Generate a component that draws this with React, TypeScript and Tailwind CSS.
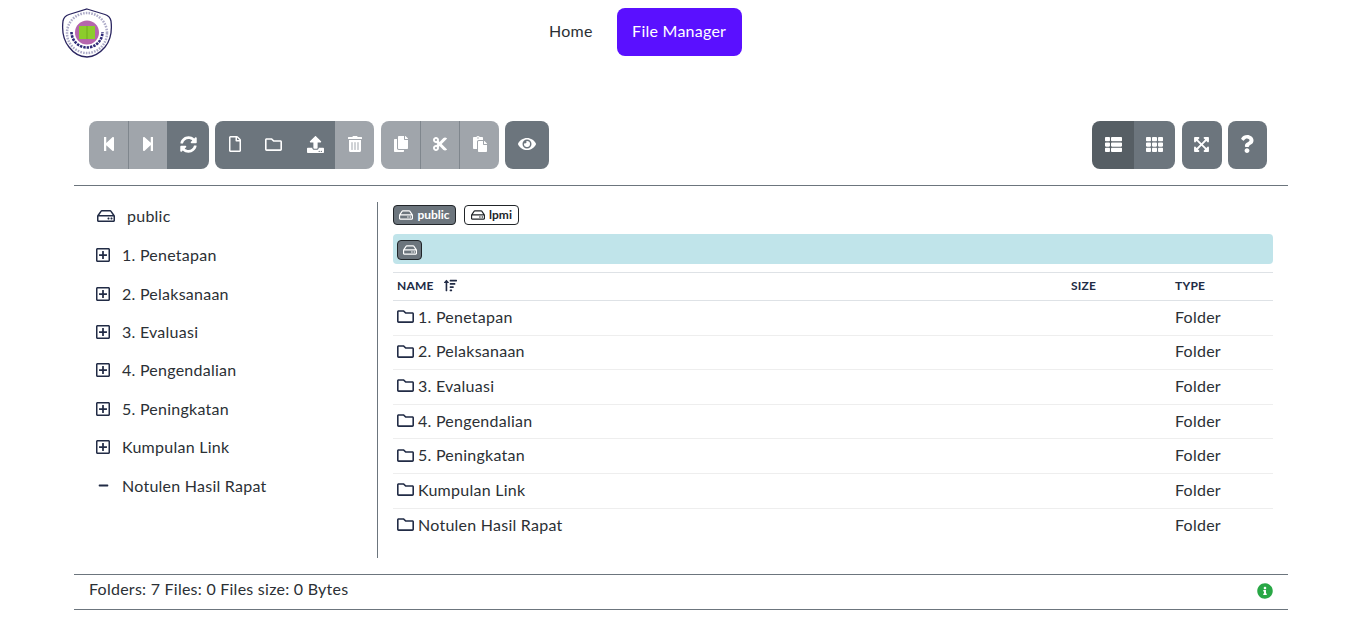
import type { ReactNode } from "react";
import {
  FaStepBackward,
  FaStepForward,
  FaSyncAlt,
  FaRegFile,
  FaRegFolder,
  FaUpload,
  FaTrashAlt,
  FaCopy,
  FaCut,
  FaPaste,
  FaEye,
  FaThList,
  FaTh,
  FaExpandArrowsAlt,
  FaQuestion,
  FaRegHdd,
  FaRegPlusSquare,
  FaMinus,
  FaSortAmountUp,
  FaInfoCircle,
} from "react-icons/fa";

const folders = [
  "1. Penetapan",
  "2. Pelaksanaan",
  "3. Evaluasi",
  "4. Pengendalian",
  "5. Peningkatan",
  "Kumpulan Link",
  "Notulen Hasil Rapat",
];

function Logo() {
  return (
    <svg width="52" height="50" viewBox="0 0 52 50" className="shrink-0">
      <path
        d="M26 1 L44 6.5 Q49 8 50 13 Q52 29 44 39 Q36 48.5 26 49 Q15 48.5 8 39 Q0 29 2 13 Q3 8 8 6.5 Z"
        fill="#ffffff"
        stroke="#2a2560"
        strokeWidth="1.3"
      />
      <circle cx="26" cy="25" r="20" fill="none" stroke="#8a88b0" strokeWidth="2.5" strokeDasharray="1.6 1.2" opacity="0.7" />
      <path d="M10.5 24 A15.5 15.5 0 0 0 41.5 24" fill="none" stroke="#2f2b78" strokeWidth="2.6" strokeDasharray="2.4 1" />
      <circle cx="26" cy="24.5" r="12" fill="#b565ad" />
      <rect x="18" y="18" width="16" height="13" fill="#8ccc2c" />
      <path d="M26 18 V31" stroke="#6aa51c" strokeWidth="0.8" />
    </svg>
  );
}

function ToolButton({
  children,
  tone = "normal",
  className = "",
}: {
  children: ReactNode;
  tone?: "normal" | "muted" | "active";
  className?: string;
}) {
  const bg =
    tone === "muted" ? "bg-[#a0a5ab]" : tone === "active" ? "bg-[#565e64]" : "bg-[#6c757d]";
  return (
    <button className={`flex h-12 items-center justify-center pb-[2px] text-white ${bg} ${className}`}>
      {children}
    </button>
  );
}

export default function App() {
  return (
    <div className="min-h-screen bg-white text-[16px] tracking-[0.25px] text-[#2b3035] [font-family:'Lato','Noto_Sans',sans-serif]">
      <nav className="flex h-16 items-start pl-[61px] pt-2">
        <Logo />
        <div className="ml-[436px] flex items-center gap-6">
          <a className="pb-[2px]">Home</a>
          <a className="flex h-12 w-[125px] items-center justify-center rounded-lg bg-[#5a10ff] pb-[2px] text-white">
            File Manager
          </a>
        </div>
      </nav>

      <div className="ml-[74px] mt-[57px] w-[1214px]">
        <div className="flex h-[65px] justify-between border-b border-[#6c757d] pl-[15px] pr-[21px]">
          <div className="flex gap-[6px]">
            <div className="flex h-12 overflow-hidden rounded-lg">
              <ToolButton tone="muted" className="w-10 border-r border-[#7f868d]"><FaStepBackward size={16} /></ToolButton>
              <ToolButton tone="muted" className="w-[38px]"><FaStepForward size={16} /></ToolButton>
              <ToolButton className="w-[42px]"><FaSyncAlt size={17} /></ToolButton>
            </div>
            <div className="flex h-12 overflow-hidden rounded-lg">
              <ToolButton className="w-10"><FaRegFile size={16} /></ToolButton>
              <ToolButton className="w-10 pr-[3px]"><FaRegFolder size={17} /></ToolButton>
              <ToolButton className="w-10"><FaUpload size={17} /></ToolButton>
              <ToolButton tone="muted" className="w-[39px]"><FaTrashAlt size={16} /></ToolButton>
            </div>
            <div className="ml-[1px] flex h-12 overflow-hidden rounded-lg">
              <ToolButton tone="muted" className="w-10 border-r border-[#7f868d]"><FaCopy size={16} /></ToolButton>
              <ToolButton tone="muted" className="w-[39px] border-r border-[#7f868d]"><FaCut size={16} /></ToolButton>
              <ToolButton tone="muted" className="w-[39px]"><FaPaste size={16} /></ToolButton>
            </div>
            <ToolButton className="w-11 rounded-lg"><FaEye size={18} /></ToolButton>
          </div>
          <div className="flex gap-[6px]">
            <div className="mr-[1px] flex h-12 overflow-hidden rounded-lg">
              <ToolButton tone="active" className="w-[42px]"><FaThList size={17} /></ToolButton>
              <ToolButton className="w-[41px]"><FaTh size={17} /></ToolButton>
            </div>
            <ToolButton className="w-10 rounded-lg pr-[2px]"><FaExpandArrowsAlt size={17} /></ToolButton>
            <ToolButton className="w-[39px] rounded-lg pr-[2px]"><FaQuestion size={18} /></ToolButton>
          </div>
        </div>

        <div className="mt-4 flex h-[356px]">
          <div className="w-[304px] shrink-0 border-r border-[#6c757d] pl-[21px]">
            <div className="flex h-[29px] items-center gap-[12px] pb-[2px] pl-[2px]">
              <FaRegHdd size={18} className="text-[#212b45]" />
              <span>public</span>
            </div>
            <ul>
              {folders.map((name, i) => (
                <li key={name} className={`flex h-[38.4px] items-center gap-[11px] pb-[2px] ${i === 0 ? "mt-[6px]" : ""}`}>
                  {i === folders.length - 1 ? (
                    <span className="flex w-4 justify-center">
                      <FaMinus size={11} className="text-[#212b45]" />
                    </span>
                  ) : (
                    <FaRegPlusSquare size={16} className="text-[#212b45]" />
                  )}
                  <span>{name}</span>
                </li>
              ))}
            </ul>
          </div>

          <div className="flex-1 px-[15px]">
            <div className="mt-[3px] flex gap-2 tracking-normal">
              <span className="flex h-5 w-[63px] items-center justify-center gap-1 rounded border border-[#212529] bg-[#6c757d] text-[12px] font-bold text-white">
                <FaRegHdd size={14} /> public
              </span>
              <span className="flex h-5 w-[55px] items-center justify-center gap-1 rounded border border-[#212529] bg-white text-[12px] font-bold text-[#212529]">
                <FaRegHdd size={14} /> lpmi
              </span>
            </div>
            <div className="mt-[9px] flex h-[30px] items-center rounded bg-[#c0e4ea] pl-1 pt-[2px]">
              <span className="flex h-5 w-[25px] items-center justify-center rounded border border-[#212529] bg-[#6c757d] text-white">
                <FaRegHdd size={14} />
              </span>
            </div>
            <table className="mt-2 w-full table-fixed border-collapse">
              <thead>
                <tr className="h-[28px] border-y border-[#dee2e6] text-left text-[12px] font-bold tracking-[0.2px] text-[#212b45]">
                  <th className="pb-[2px] pl-1">
                    <span className="flex items-center gap-[10px]">
                      NAME <FaSortAmountUp size={13} />
                    </span>
                  </th>
                  <th className="w-[104px] pb-[2px] pl-1">SIZE</th>
                  <th className="w-[102px] pb-[2px] pl-1">TYPE</th>
                </tr>
              </thead>
              <tbody>
                {folders.map((name, i) => (
                  <tr key={name} className={`h-[34.6px] ${i < folders.length - 1 ? "border-b border-[#eeeeee]" : ""}`}>
                    <td className="pb-[2px] pl-1">
                      <span className="flex items-center gap-[4px]">
                        <FaRegFolder size={17} className="text-[#212b45]" />
                        {name}
                      </span>
                    </td>
                    <td />
                    <td className="pb-[2px] pl-1">Folder</td>
                  </tr>
                ))}
              </tbody>
            </table>
          </div>
        </div>

        <div className="mt-4 flex h-[36px] items-center justify-between border-y border-[#6c757d] pb-[2px] pl-[15px] pr-[15px]">
          <span className="pb-[4px]">Folders: 7 Files: 0 Files size: 0 Bytes</span>
          <FaInfoCircle size={16} className="text-[#28a745]" />
        </div>
      </div>
    </div>
  );
}
